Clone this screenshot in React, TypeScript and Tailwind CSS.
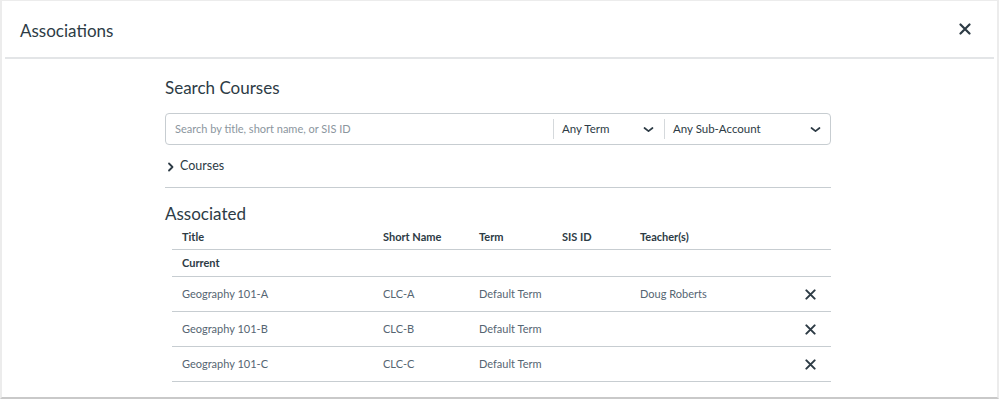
import React from "react";

const rows = [
  { title: "Geography 101-A", short: "CLC-A", term: "Default Term", sis: "", teacher: "Doug Roberts" },
  { title: "Geography 101-B", short: "CLC-B", term: "Default Term", sis: "", teacher: "" },
  { title: "Geography 101-C", short: "CLC-C", term: "Default Term", sis: "", teacher: "" },
];

function XIcon({ size = 12 }: { size?: number }) {
  return (
    <svg width={size} height={size} viewBox="0 0 12 12" fill="none">
      <path d="M1.5 1.5 L10.5 10.5 M10.5 1.5 L1.5 10.5" stroke="#2D3B45" strokeWidth="2.2" strokeLinecap="round" />
    </svg>
  );
}

function Chevron() {
  return (
    <svg width="11" height="7" viewBox="0 0 11 7" fill="none">
      <path d="M1.5 2 L5.5 5.2 L9.5 2" stroke="#2D3B45" strokeWidth="1.7" strokeLinecap="round" strokeLinejoin="round" />
    </svg>
  );
}

export default function App() {
  return (
    <div
      className="w-[999px] h-[401px] bg-white text-[#2D3B45] overflow-hidden"
      style={{ fontFamily: "Lato, 'Noto Sans', sans-serif" }}
    >
      <div className="h-[399px] border-l-2 border-r-2 border-t border-[#ececec] border-b-2 border-b-[#c9c9c9]">
        {/* Header */}
        <div className="mx-[3px] h-[58px] border-b-2 border-[#e3e5e7] flex items-center justify-between pl-[15px] pr-[23px]">
          <h2 className="text-[17px] leading-none font-normal pt-[2px]">Associations</h2>
          <button className="p-0 leading-none">
            <XIcon size={12} />
          </button>
        </div>

        {/* Body */}
        <div className="ml-[163px] w-[666px] pt-[17px]">
          <h3 className="text-[17px] leading-[24px] font-normal">Search Courses</h3>

          <div className="mt-[13px] h-[32px] border border-[#c7cdd1] rounded-[4px] flex items-center text-[11px]">
            <div className="flex-1 pl-[9px] text-[#8b969e]">Search by title, short name, or SIS ID</div>
            <div className="w-px h-[20px] bg-[#d5d9dc]" />
            <div className="w-[110px] flex items-center justify-between pl-[8px] pr-[10px]">
              <span className="text-[11.5px]">Any Term</span>
              <Chevron />
            </div>
            <div className="w-px h-[20px] bg-[#d5d9dc]" />
            <div className="w-[165px] flex items-center justify-between pl-[8px] pr-[9px]">
              <span className="text-[11.5px]">Any Sub-Account</span>
              <Chevron />
            </div>
          </div>

          <div className="h-[43px] flex items-center gap-[5px] pl-[2px] pt-[1px] text-[12.5px] border-b border-[#c7cdd1]">
            <svg width="8" height="10" viewBox="0 0 8 10" fill="none">
              <path d="M2 1.5 L5.5 5 L2 8.5" stroke="#2D3B45" strokeWidth="1.8" strokeLinecap="round" strokeLinejoin="round" />
            </svg>
            <span>Courses</span>
          </div>

          <h3 className="mt-[14px] text-[17px] leading-[24px] font-normal">Associated</h3>

          {/* Table */}
          <div className="ml-[7px] text-[11px]">
            <div className="h-[24px] flex items-center font-bold border-b border-[#c7cdd1] pb-[1px]">
              <div className="w-[211px] pl-[10px]">Title</div>
              <div className="w-[96px]">Short Name</div>
              <div className="w-[83px]">Term</div>
              <div className="w-[78px]">SIS ID</div>
              <div className="flex-1">Teacher(s)</div>
            </div>
            <div className="h-[27px] flex items-center font-bold border-b border-[#c7cdd1] pl-[10px]">Current</div>
            {rows.map((r) => (
              <div key={r.title} className="h-[35px] flex items-center border-b border-[#c7cdd1] text-[#556572]">
                <div className="w-[211px] pl-[10px]">{r.title}</div>
                <div className="w-[96px]">{r.short}</div>
                <div className="w-[83px]">{r.term}</div>
                <div className="w-[78px]">{r.sis}</div>
                <div className="w-[165px]">{r.teacher}</div>
                <div className="flex items-center">
                  <XIcon size={11} />
                </div>
              </div>
            ))}
          </div>
        </div>
      </div>
    </div>
  );
}
